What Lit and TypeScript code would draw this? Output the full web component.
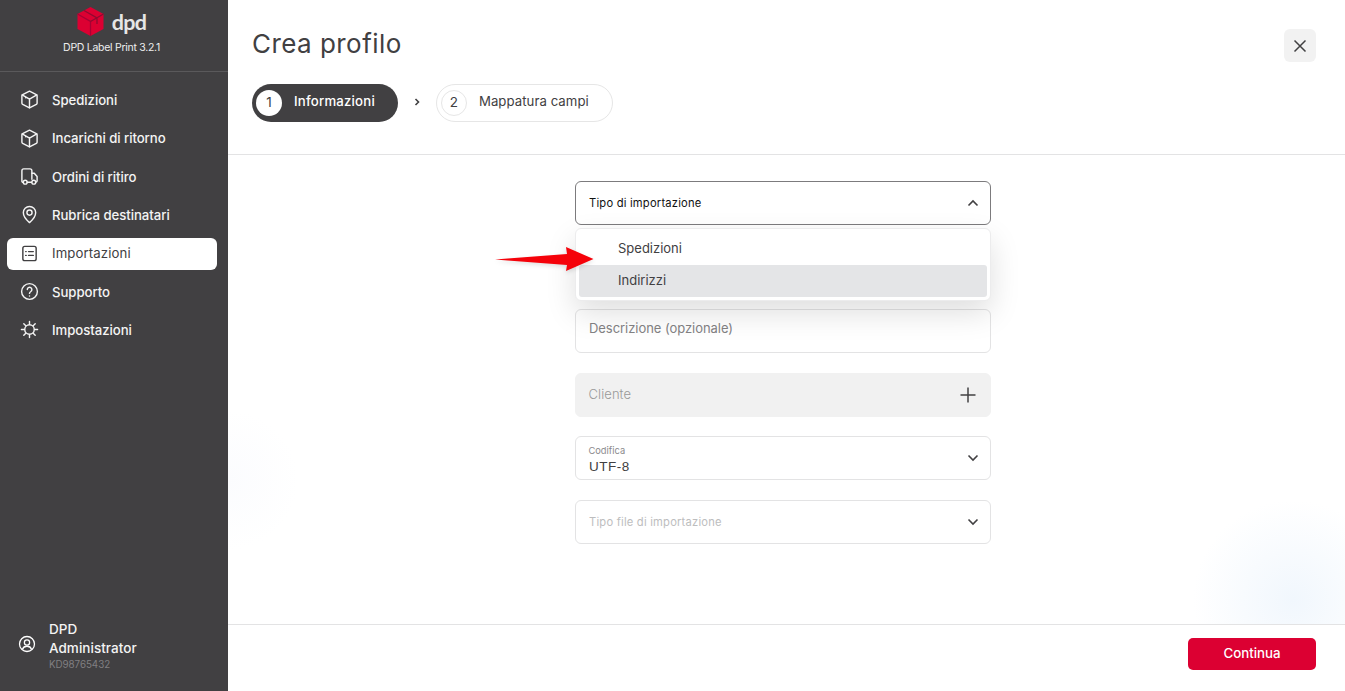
import { LitElement, html, css, svg } from "lit";
import { customElement } from "lit/decorators.js";

const box = svg`<path d="M12 3.200 19.200 6.800a1.500 1.500 0 0 1 .8 1.300v7.800a1.500 1.500 0 0 1-.8 1.300L12 20.800 4.800 17.200a1.500 1.500 0 0 1-.8-1.300V8.100a1.500 1.500 0 0 1 .8-1.300z"/><path d="M4.300 7.200 12 11.500l7.700-4.300M12 11.500v9.300M8 9.800v.4"/>`;
const icons: Record<string, any> = {
  box,
  truck: svg`<path d="M5 18H5.200M14 18h-4.500M4.500 18A1.500 1.500 0 0 1 4 16.500V6a2 2 0 0 1 2-2h6.500a2 2 0 0 1 2 2v9"/><path d="M14.500 8.500h2.500l3 3.500v4.500a1.500 1.500 0 0 1-1 1.400"/><circle cx="7.500" cy="18" r="2"/><circle cx="16.500" cy="18" r="2"/>`,
  pin: svg`<path d="M12 20.500s-6.500-5.300-6.500-10.500a6.500 6.500 0 0 1 13 0c0 5.200-6.500 10.500-6.500 10.500z"/><circle cx="12" cy="10" r="2.700"/>`,
  list: svg`<rect x="5" y="4.500" width="14" height="15" rx="2"/><path d="M11 10h5M11 14h5M8 10h.5M8 14h.5"/>`,
  help: svg`<circle cx="12" cy="12" r="8.300"/><path d="M9.700 10a2.400 2.400 0 1 1 3.700 2c-.9.600-1.400 1-1.400 2M12 16.600v.2"/>`,
  gear: svg`<circle cx="12" cy="12" r="5"/><path d="M12 3.500v3M12 17.500v3M3.500 12h3M17.500 12h3M6 6l2.100 2.100M15.900 15.900 18 18M6 18l2.100-2.100M15.900 8.100 18 6"/>`,
};

const nav = [
  ["box", "Spedizioni"],
  ["box", "Incarichi di ritorno"],
  ["truck", "Ordini di ritiro"],
  ["pin", "Rubrica destinatari"],
  ["list", "Importazioni"],
  ["help", "Supporto"],
  ["gear", "Impostazioni"],
];

const chevron = (up = false) => html`<svg class="chev" viewBox="0 0 12 8" width="12" height="8"><path d=${up ? "M1.500 6.500 6 2l4.500 4.500" : "M1.500 1.500 6 6l4.500-4.500"}/></svg>`;

@customElement("app-root")
export class AppRoot extends LitElement {
  static styles = css`
    :host { display: flex; width: 1345px; height: 691px; overflow: hidden; font-family: Inter, "Noto Sans", sans-serif; color: #414042; }
    * { box-sizing: border-box; }
    .side { width: 228px; flex: none; background: #414042; color: #fff; display: flex; flex-direction: column; }
    .brand { height: 72px; border-bottom: 1px solid #5a595b; display: flex; flex-direction: column; align-items: center; padding: 7px 5px 0 0; }
    .logo { display: flex; align-items: center; gap: 8px; height: 29px; }
    .logo span { font: 700 21.500px/1 Lato, sans-serif; color: #e6e6e6; letter-spacing: -0.700px; padding-top: 3px; }
    .version { font-size: 10.500px; line-height: 12px; margin-top: 6px; letter-spacing: -0.280px; color: #eee; }
    nav { display: flex; flex-direction: column; gap: 6.330px; padding: 12.400px 11px 0 7px; flex: 1; }
    .item { height: 32px; display: flex; align-items: center; border-radius: 6px; padding: 0 0 1px 13px; gap: 13px; font-size: 13.200px; font-weight: 500; letter-spacing: -0.060px; color: #f4f4f4; }
    .item svg { width: 19px; height: 19px; fill: none; stroke: currentColor; stroke-width: 1.500; stroke-linecap: round; stroke-linejoin: round; flex: none; }
    .item.on { background: #fff; color: #414042; font-weight: 400; letter-spacing: .120px; }
    .user { display: flex; align-items: center; gap: 13px; padding: 0 0 20px 18px; }
    .user svg { width: 18px; height: 18px; fill: none; stroke: #fff; stroke-width: 1.700; flex: none; margin-bottom: 3px; }
    .user .name { font-size: 13.500px; line-height: 19px; font-weight: 500; letter-spacing: .030px; color: #f4f4f4; }
    .user .id { font-size: 9.800px; line-height: 12px; color: #807f81; letter-spacing: -0.050px; margin-top: 1px; }
    main { flex: 1; display: flex; flex-direction: column; position: relative;
      background:
        radial-gradient(circle 100px at 1065px 600px, #f1f7fd, #fff0),
        radial-gradient(circle 70px at 0 480px, #fbfcfe, #fff0), #fff; }
    .head { height: 155px; border-bottom: 1px solid #e3e3e4; padding: 26px 29px 0 24px; flex: none; }
    .titlerow { display: flex; justify-content: space-between; align-items: flex-start; height: 58px; }
    h1 { margin: 0; font-size: 26px; line-height: 36px; font-weight: 400; letter-spacing: .450px; color: #414042; }
    .close { width: 32px; height: 33px; margin-top: 3px; background: #f2f2f2; border-radius: 6px; display: flex; align-items: center; justify-content: center; }
    .close svg { width: 14px; height: 14px; stroke: #414042; stroke-width: 1.500; fill: none; }
    .steps { display: flex; align-items: center; }
    .step { height: 38px; border-radius: 19px; display: flex; align-items: center; padding: 0 23px 4px 4px; font-size: 13.200px; gap: 12px; }
    .step b { width: 26px; height: 26px; border-radius: 50%; display: flex; align-items: center; justify-content: center; font-weight: 400; font-size: 13.500px; margin-bottom: -4px; padding-bottom: 3px; }
    .step.on { background: #414042; color: #fff; font-weight: 500; letter-spacing: .200px; }
    .step.on b { background: #fff; color: #414042; }
    .step.off { border: 1px solid #e6e6e6; color: #414042; letter-spacing: .050px; }
    .step.off b { border: 1px solid #e6e6e6; }
    .sep { width: 38px; display: flex; justify-content: center; padding-bottom: 2px; }
    .sep svg { width: 6px; height: 8px; stroke: #414042; stroke-width: 1.600; fill: none; }
    .body { flex: 1; padding: 26.300px 0 0 347px; position: relative; }
    form { width: 416px; display: flex; flex-direction: column; gap: 19.800px; position: relative; }
    .field { height: 44px; border: 1px solid #e3e3e4; border-radius: 6px; display: flex; align-items: center; justify-content: space-between; padding: 0 11.500px 0 13px; font-size: 13px; color: #838284; letter-spacing: -0.050px; background: #fff; }
    .chev { fill: none; stroke: #414042; stroke-width: 1.600; flex: none; }
    .field.open { border-color: #7c7b7d; color: #111; font-size: 11.200px; letter-spacing: .200px; padding-bottom: 1px; }
    .field.desc { align-items: flex-start; padding-top: 10px; }
    .field.grey { background: #f1f1f1; border-color: #f1f1f1; color: #999; padding: 0 14px 2px 12.500px; letter-spacing: .080px; font-weight: 300; }
    .field.grey svg { width: 16px; height: 16px; stroke: #414042; stroke-width: 1.500; fill: none; margin-bottom: -2px; }
    .stack { display: flex; flex-direction: column; padding-top: 3px; margin-left: -0.500px; }
    .stack small { font-size: 9.300px; line-height: 11px; color: #8b8a8c; letter-spacing: 0; }
    .stack span { font-size: 13.500px; line-height: 16px; color: #414042; letter-spacing: .500px; font-family: "Liberation Sans", sans-serif; margin: 3px 0 0 .5px; }
    .field.ph { color: #bdbdbe; font-size: 11.200px; letter-spacing: .200px; }
    .menu { position: absolute; left: 0; top: 47px; width: 416px; height: 73px; background: #fff; border: 1px solid #ececed; border-radius: 6px; padding: 4px 3px 3px; box-shadow: 0 12px 30px rgba(0, 0, 0, .13); display: flex; flex-direction: column; z-index: 2; font-size: 13px; }
    .menu div { height: 32px; display: flex; align-items: center; padding: 0 0 3px 39px; border-radius: 3px; }
    .menu .hl { background: #e4e5e7; }
    .arrow { position: absolute; left: 267px; top: 92px; width: 100px; height: 24px; z-index: 3; filter: drop-shadow(0 2px 2px rgba(0, 0, 0, .12)); }
    footer { height: 67px; flex: none; border-top: 1px solid #e3e3e4; display: flex; justify-content: flex-end; padding: 13px 29px 0 0; background: #fff; }
    .go { width: 128px; height: 32px; background: #dc0032; color: #fff; border-radius: 5px; display: flex; align-items: center; justify-content: center; padding-bottom: 3px; font-size: 13.300px; font-weight: 500; }
  `;

  render() {
    return html`
      <aside class="side">
        <div class="brand">
          <div class="logo">
            <svg width="27" height="29" viewBox="0 0 27 29">
              <path d="M13.500 0 26.500 7v15l-13 7-13-7V7z" fill="#dc0032"/>
              <path d="M13.500 29V14.500L.5 7" fill="none" stroke="#a90034" stroke-width="1.300"/>
              <path d="M13.500 14.500 26.500 7M7 3.500l13 7.500v6" fill="none" stroke="#8f0a30" stroke-width="1.300"/>
            </svg>
            <span>dpd</span>
          </div>
          <div class="version">DPD Label Print 3.2.1</div>
        </div>
        <nav>
          ${nav.map(([ic, label], i) => html`<div class="item ${i === 4 ? "on" : ""}"><svg viewBox="2 2 20 20">${icons[ic]}</svg>${label}</div>`)}
        </nav>
        <div class="user">
          <svg viewBox="0 0 24 24"><circle cx="12" cy="12" r="10"/><circle cx="12" cy="10" r="3.500"/><path d="M6 19c1-3 3.500-4 6-4s5 1 6 4"/></svg>
          <div>
            <div class="name">DPD<br />Administrator</div>
            <div class="id">KD98765432</div>
          </div>
        </div>
      </aside>
      <main>
        <div class="head">
          <div class="titlerow">
            <h1>Crea profilo</h1>
            <div class="close"><svg viewBox="0 0 14 14"><path d="M1.500 1.500l11 11M12.500 1.500l-11 11"/></svg></div>
          </div>
          <div class="steps">
            <div class="step on"><b>1</b>Informazioni</div>
            <div class="sep"><svg viewBox="0 0 6 8"><path d="M1.500 1 4.500 4l-3 3"/></svg></div>
            <div class="step off"><b>2</b>Mappatura campi</div>
          </div>
        </div>
        <div class="body">
          <form>
            <div class="field open">Tipo di importazione ${chevron(true)}</div>
            <div class="field"></div>
            <div class="field desc">Descrizione (opzionale)</div>
            <div class="field grey">Cliente <svg viewBox="0 0 16 16"><path d="M8 .5v15M.5 8h15"/></svg></div>
            <div class="field"><div class="stack"><small>Codifica</small><span>UTF-8</span></div>${chevron()}</div>
            <div class="field ph">Tipo file di importazione ${chevron()}</div>
            <div class="menu">
              <div>Spedizioni</div>
              <div class="hl">Indirizzi</div>
            </div>
          </form>
          <svg class="arrow" viewBox="0 0 100 24"><path d="M0 12.500 72 7 71 0 98.500 12 71 24 72 18z" fill="#f5020a"/></svg>
        </div>
        <footer><div class="go">Continua</div></footer>
      </main>
    `;
  }
}
